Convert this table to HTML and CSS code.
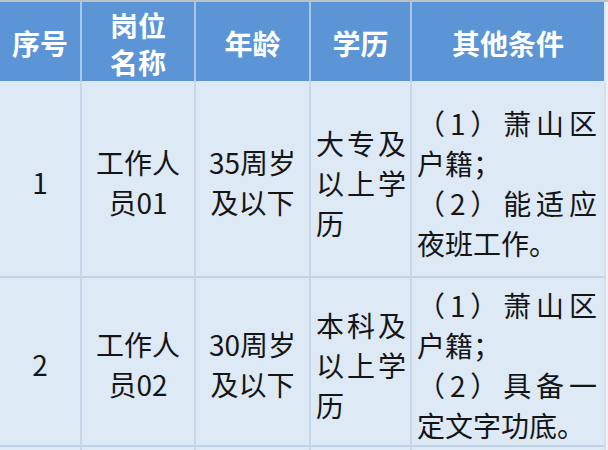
FILE: index.html
```html
<!DOCTYPE html>
<html lang="zh-CN">
<head>
<meta charset="utf-8">
<title>岗位表</title>
<link rel="stylesheet" href="styles.css">
</head>
<body>
<div class="page">
  <div class="topline"></div>
  <div class="table">
    <div class="cell head"><div class="txt">序号</div></div>
    <div class="cell head"><div class="txt">岗位<br>名称</div></div>
    <div class="cell head"><div class="txt">年龄</div></div>
    <div class="cell head"><div class="txt">学历</div></div>
    <div class="cell head last"><div class="txt">其他条件</div></div>

    <div class="cell body r1"><div class="txt">1</div></div>
    <div class="cell body r1"><div class="txt">工作人员01</div></div>
    <div class="cell body r1"><div class="txt">35周岁及以下</div></div>
    <div class="cell body r1 left edu"><div class="txt">大专及以上学历</div></div>
    <div class="cell body r1 left cond last"><div class="txt">（1）萧山区户籍；<br>（2）能适应夜班工作。</div></div>

    <div class="cell body r2"><div class="txt">2</div></div>
    <div class="cell body r2"><div class="txt">工作人员02</div></div>
    <div class="cell body r2"><div class="txt">30周岁及以下</div></div>
    <div class="cell body r2 left edu"><div class="txt">本科及以上学历</div></div>
    <div class="cell body r2 left cond last"><div class="txt">（1）萧山区户籍；<br>（2）具备一定文字功底。</div></div>

    <div class="cell body r3"></div>
    <div class="cell body r3"></div>
    <div class="cell body r3"></div>
    <div class="cell body r3"></div>
    <div class="cell body r3 last"></div>
  </div>
</div>
</body>
</html>
```

FILE: styles.css
```css
html, body {
  margin: 0;
  padding: 0;
}
body {
  width: 608px;
  height: 450px;
  overflow: hidden;
  background: #eef2f6;
  font-family: "Noto Sans CJK SC", "Noto Sans", sans-serif;
}
.page {
  width: 608px;
  height: 450px;
  overflow: hidden;
}
.topline {
  height: 2px;
  background: #bcc3ca;
}
.table {
  display: grid;
  width: 606px;
  grid-template-columns: 82px 114px 115px 101px 194px;
  grid-template-rows: 81px 195px 169px 40px;
}
.cell {
  box-sizing: border-box;
  display: flex;
  align-items: center;
  justify-content: center;
  border-right: 2px solid #c6d7ea;
  border-bottom: 2px solid #c1d3e7;
  padding: 4px 4px 0 4px;
  min-width: 0;
}
.head {
  background: #5b95d5;
  color: #ffffff;
  font-weight: bold;
  font-size: 28px;
  line-height: 37px;
  text-align: center;
  border-right-color: #a9c8ed;
  border-bottom-color: #dfe9f6;
}
.head.last {
  border-right-color: #dfe9f6;
}
.body {
  background: #dde9f5;
  color: #151515;
  font-size: 28px;
  line-height: 40px;
  text-align: center;
}
.body.last {
  border-right-color: #d3dfec;
}
.txt {
  width: 100%;
}
.left {
  justify-content: flex-start;
  text-align: justify;
}
.edu {
  padding: 6px 4px 0 5px;
}
.cond {
  padding: 6px 7px 0 5px;
}
```
